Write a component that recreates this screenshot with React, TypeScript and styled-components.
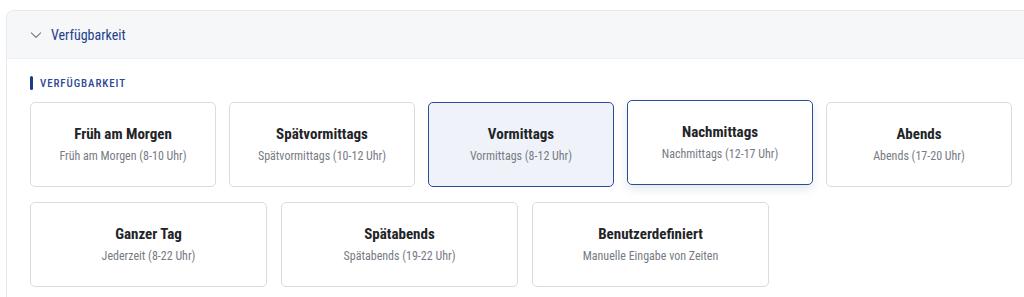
import React from "react";
import styled, { createGlobalStyle } from "styled-components";

const GlobalStyle = createGlobalStyle`
  body {
    margin: 0;
    background: #ffffff;
    font-family: "Roboto Condensed", "Liberation Sans Narrow", Roboto, sans-serif;
    font-stretch: condensed;
    overflow: hidden;
  }
`;

const Page = styled.div`
  padding: 10px 0 0 6px;
`;

const Panel = styled.section`
  width: 1040px;
  border: 1px solid #e7e9ed;
  border-right: none;
  border-radius: 8px 0 0 0;
  overflow: hidden;
`;

const Header = styled.div`
  display: flex;
  align-items: center;
  gap: 8px;
  height: 47px;
  padding-left: 22px;
  background: #f6f7f9;
  border-bottom: 1px solid #eef0f3;
`;

const Title = styled.span`
  color: #22408c;
  font-size: 14px;
  font-weight: 400;
`;

const Body = styled.div`
  padding: 17px 0 6px 23px;
`;

const Label = styled.div`
  display: flex;
  align-items: center;
  gap: 7px;
  height: 14px;
  margin-bottom: 12px;
  color: #2d4a94;
  font-size: 11px;
  font-weight: 500;
  letter-spacing: 0.9px;

  &::before {
    content: "";
    width: 3px;
    height: 14px;
    border-radius: 2px;
    background: #1e3a8a;
  }
`;

const Grid = styled.div<{ $cols: number; $width: number; $gap: number }>`
  display: grid;
  grid-template-columns: repeat(${({ $cols }) => $cols}, ${({ $width }) => $width}px);
  gap: ${({ $gap }) => $gap}px;
  margin-bottom: 15px;
`;

const Card = styled.button<{ $selected?: boolean; $hover?: boolean }>`
  display: flex;
  flex-direction: column;
  align-items: center;
  justify-content: center;
  gap: 6px;
  height: 85px;
  padding: 0 0 2px;
  font-family: inherit;
  font-stretch: inherit;
  border-radius: 5px;
  cursor: pointer;
  border: ${({ $selected, $hover }) =>
    $selected || $hover ? "1.5px solid #2b4b9b" : "1px solid #d8dce2"};
  background: ${({ $selected }) => ($selected ? "#eff3f9" : "#ffffff")};
  box-shadow: ${({ $hover }) =>
    $hover ? "0 4px 10px rgba(30, 50, 90, 0.12)" : "none"};
  transform: ${({ $hover }) => ($hover ? "translateY(-2px)" : "none")};
`;

const CardTitle = styled.span`
  color: #222428;
  font-size: 15px;
  font-weight: 700;
  line-height: 18px;
`;

const CardSub = styled.span`
  color: #767b83;
  font-size: 12px;
  line-height: 14px;
`;

const Divider = styled.div`
  width: 1006px;
  margin-left: -23px;
  height: 1px;
  background: #eef0f2;
`;

type Slot = { title: string; sub: string; selected?: boolean; hover?: boolean };

const rowOne: Slot[] = [
  { title: "Früh am Morgen", sub: "Früh am Morgen (8-10 Uhr)" },
  { title: "Spätvormittags", sub: "Spätvormittags (10-12 Uhr)" },
  { title: "Vormittags", sub: "Vormittags (8-12 Uhr)", selected: true },
  { title: "Nachmittags", sub: "Nachmittags (12-17 Uhr)", hover: true },
  { title: "Abends", sub: "Abends (17-20 Uhr)" },
];

const rowTwo: Slot[] = [
  { title: "Ganzer Tag", sub: "Jederzeit (8-22 Uhr)" },
  { title: "Spätabends", sub: "Spätabends (19-22 Uhr)" },
  { title: "Benutzerdefiniert", sub: "Manuelle Eingabe von Zeiten" },
];

const Chevron = () => (
  <svg width="14" height="14" viewBox="0 0 24 24" fill="none" stroke="#6b7280" strokeWidth="1.8" strokeLinecap="round" strokeLinejoin="round">
    <path d="M4 8.5l8 7.5 8-7.5" />
  </svg>
);

const SlotCard = ({ slot }: { slot: Slot }) => (
  <Card $selected={slot.selected} $hover={slot.hover}>
    <CardTitle>{slot.title}</CardTitle>
    <CardSub>{slot.sub}</CardSub>
  </Card>
);

const App: React.FC = () => (
  <Page>
    <GlobalStyle />
    <Panel>
      <Header>
        <Chevron />
        <Title>Verfügbarkeit</Title>
      </Header>
      <Body>
        <Label>VERFÜGBARKEIT</Label>
        <Grid $cols={5} $width={186} $gap={13}>
          {rowOne.map((s) => (
            <SlotCard key={s.title} slot={s} />
          ))}
        </Grid>
        <Grid $cols={4} $width={237} $gap={14}>
          {rowTwo.map((s) => (
            <SlotCard key={s.title} slot={s} />
          ))}
        </Grid>
        <Divider />
      </Body>
    </Panel>
  </Page>
);

export default App;
